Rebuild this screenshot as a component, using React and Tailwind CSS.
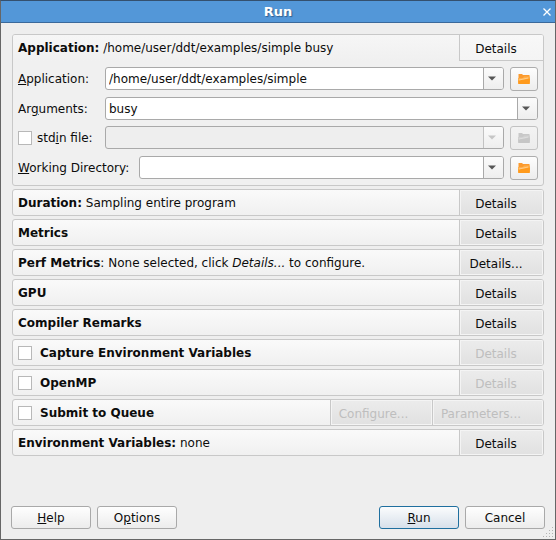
import React from "react";
import { useState } from "react";
import clsx from "clsx";

function FolderIcon({ disabled }) {
    return (
        <svg width="14" height="12" viewBox="0 0 14 12">
            <path d="M1.5 1H5l1 1h6.5v8h-11z" fill={disabled ? "#c8c8c8" : "#fb9a2e"} />
            <path d="M1 5h5l1-1.5h6L12.6 11H1.4z" fill={disabled ? "#d0d0d0" : "#ffae48"} />
            <path d="M1.2 7.5L13 5.5 12.6 11H1.4z" fill={disabled ? "#c6c6c6" : "#ff9a1c"} />
            <path d="M2 7l9-2" stroke={disabled ? "#dedede" : "#ffcd8a"} strokeWidth="1" />
        </svg>
    );
}

function BrowseButton({ label, disabled }) {
    return (
        <button
            type="button"
            aria-label={label}
            disabled={disabled}
            className={clsx(
                "flex h-6 w-7 shrink-0 items-center justify-center rounded-[3px] border bg-linear-to-b",
                disabled ? "border-[#c2c2c2] from-[#f3f3f3] to-[#ececec]" : "border-[#adadad] from-[#fdfdfd] to-[#ededed]"
            )}
        >
            <FolderIcon disabled={disabled} />
        </button>
    );
}

function ComboBox({ id, value, disabled, label }) {
    const [text, setText] = useState(value);

    return (
        <div
            className={clsx(
                "flex h-[23px] min-w-0 flex-1 overflow-hidden rounded-[3px] border border-[#a9a9a9]",
                disabled ? "bg-[#eeeeee]" : "bg-white"
            )}
        >
            <input
                id={id}
                type="text"
                aria-label={label}
                value={text}
                disabled={disabled}
                onChange={(e) => setText(e.target.value)}
                className="min-w-0 flex-1 px-[3px] outline-none"
            />
            <button
                type="button"
                aria-label="Show history"
                disabled={disabled}
                className={clsx(
                    "flex w-5 items-center justify-center border-l bg-linear-to-b from-[#fbfbfb] to-[#eeeeee] pr-[3px]",
                    disabled ? "border-[#c2c2c2]" : "border-[#a9a9a9]"
                )}
            >
                <svg width="8" height="5" viewBox="0 0 8 5">
                    <path d="M0 .5h8L4 4.5z" fill={disabled ? "#c6c6c6" : "#555555"} />
                </svg>
            </button>
        </div>
    );
}

function CheckBox({ id, label }) {
    return (
        <input
            id={id}
            type="checkbox"
            aria-label={label}
            className="size-[14px] shrink-0 appearance-none border border-[#b8b8b8] bg-white checked:bg-[#308cc6]"
        />
    );
}

function DetailsButton({ children, disabled, className }) {
    return (
        <button
            disabled={disabled}
            className={clsx(
                "shrink-0 border-l border-[#c8c8c8] bg-linear-to-b from-[#ececec] to-[#e1e1e1] pt-[2px] inset-shadow-[0_0_0_1px_#f4f4f4] disabled:text-[#bebebe]",
                className
            )}
        >
            {children}
        </button>
    );
}

function Section({ children, action }) {
    return (
        <section className="flex h-[27px] overflow-hidden rounded-[3px] border border-[#c8c8c8] bg-linear-to-b from-[#fafafa] to-[#f0f0f0]">
            <div className="flex min-w-0 flex-1 items-center px-[5px] whitespace-pre">{children}</div>
            {action}
        </section>
    );
}

function DialogButton({ children, primary }) {
    return (
        <button
            className={clsx(
                "h-[23px] w-20 rounded-[3px] border bg-linear-to-b",
                primary ? "border-[#1f6f9f] from-[#fbfcfd] to-[#d7e0ea]" : "border-[#a9a9a9] from-[#fefefe] to-[#ececec]"
            )}
        >
            {children}
        </button>
    );
}

const details = <DetailsButton className="w-[84px] pr-[11px]">Details</DetailsButton>;
const detailsDisabled = <DetailsButton disabled className="w-[84px] pr-[11px]">Details</DetailsButton>;

export default function App() {
    return (
        <div className="relative flex min-h-screen flex-col border border-t-[#34506e] border-x-[#666666] border-b-[#666666] bg-[#eeeeee] font-['DejaVu_Sans',sans-serif] text-[12px] leading-[14px] text-[#0c0c0c]">
            <header className="relative flex h-[22px] items-center justify-center border-b border-[#3a699b] bg-[#5397d8] text-white">
                <h1 className="text-[13px] font-bold text-shadow-[1px_1px_1px_#2f5e8f]">Run</h1>
                <button aria-label="Close" className="absolute top-0 right-0 flex h-[21px] w-4 items-center justify-center">
                    <svg width="8" height="8" viewBox="0 0 8 8">
                        <path d="M.5.5l7 7M7.5.5l-7 7" stroke="white" strokeWidth="1.3" />
                    </svg>
                </button>
            </header>

            <main className="flex flex-col gap-[3px] px-[11px] pt-[11px]">
                <section className="overflow-hidden rounded-[3px] border border-[#c8c8c8] bg-[#f0f0f0]">
                    <div className="flex h-[26px] bg-linear-to-b from-[#f6f6f6] to-[#f0f0f0]">
                        <div className="flex min-w-0 flex-1 items-center px-[5px] whitespace-pre">
                            <b>Application:</b> /home/user/ddt/examples/simple busy
                        </div>
                        <button className="w-[84px] border-b border-l border-[#c8c8c8] bg-linear-to-b from-[#f8f8f8] to-[#f4f4f4] pt-[2px] pr-[11px]">
                            Details
                        </button>
                    </div>

                    <form className="flex flex-col gap-[6px] px-[5px] pt-[6px] pb-[5px]">
                        <div className="flex">
                            <label htmlFor="application" className="w-[87px] self-center"><u>A</u>pplication:</label>
                            <ComboBox id="application" value="/home/user/ddt/examples/simple" />
                            <div className="pl-[6px]"><BrowseButton label="Browse for application" /></div>
                        </div>
                        <div className="flex">
                            <label htmlFor="arguments" className="w-[87px] self-center">Ar<u>g</u>uments:</label>
                            <ComboBox id="arguments" value="busy" />
                        </div>
                        <div className="flex">
                            <div className="flex w-[87px] items-center gap-[5px]">
                                <CheckBox id="stdin" />
                                <label htmlFor="stdin">std<u>i</u>n file:</label>
                            </div>
                            <ComboBox id="stdin-path" label="stdin file path" value="" disabled />
                            <div className="pl-[6px]"><BrowseButton label="Browse for stdin file" disabled /></div>
                        </div>
                        <div className="flex">
                            <label htmlFor="directory" className="w-[121px] self-center"><u>W</u>orking Directory:</label>
                            <ComboBox id="directory" value="" />
                            <div className="pl-[6px]"><BrowseButton label="Browse for working directory" /></div>
                        </div>
                    </form>
                </section>

                <Section action={details}><b>Duration:</b> Sampling entire program</Section>
                <Section action={details}><b>Metrics</b></Section>
                <Section action={<DetailsButton className="w-[84px] pr-[11px]">Details...</DetailsButton>}>
                    <b>Perf Metrics</b>: None selected, click <i>Details...</i> to configure.
                </Section>
                <Section action={details}><b>GPU</b></Section>
                <Section action={details}><b>Compiler Remarks</b></Section>
                <Section action={detailsDisabled}>
                    <CheckBox id="capture" />
                    <label htmlFor="capture" className="pl-2 font-bold">Capture Environment Variables</label>
                </Section>
                <Section action={detailsDisabled}>
                    <CheckBox id="openmp" />
                    <label htmlFor="openmp" className="pl-2 font-bold">OpenMP</label>
                </Section>
                <Section
                    action={
                        <>
                            <DetailsButton disabled className="w-[102px] pr-4">Configure...</DetailsButton>
                            <DetailsButton disabled className="w-[111px] pr-[14px]">Parameters...</DetailsButton>
                        </>
                    }
                >
                    <CheckBox id="queue" />
                    <label htmlFor="queue" className="pl-2 font-bold">Submit to Queue</label>
                </Section>
                <Section action={details}><b>Environment Variables:</b> none</Section>
            </main>

            <footer className="mt-auto flex gap-[6px] px-[10px] pb-[10px]">
                <DialogButton><u>H</u>elp</DialogButton>
                <DialogButton>O<u>p</u>tions</DialogButton>
                <div className="flex-1" />
                <DialogButton primary><u>R</u>un</DialogButton>
                <DialogButton>Cancel</DialogButton>
            </footer>

            {/* Resize grip */}
            <svg className="absolute right-[1px] bottom-[1px]" width="11" height="11" viewBox="0 0 11 11" fill="#b4b4b4">
                <path d="M9 0h1v1H9zM9 3h1v1H9zM6 3h1v1H6zM9 6h1v1H9zM6 6h1v1H6zM3 6h1v1H3zM9 9h1v1H9zM6 9h1v1H6zM3 9h1v1H3zM0 9h1v1H0z" />
            </svg>
        </div>
    );
}
